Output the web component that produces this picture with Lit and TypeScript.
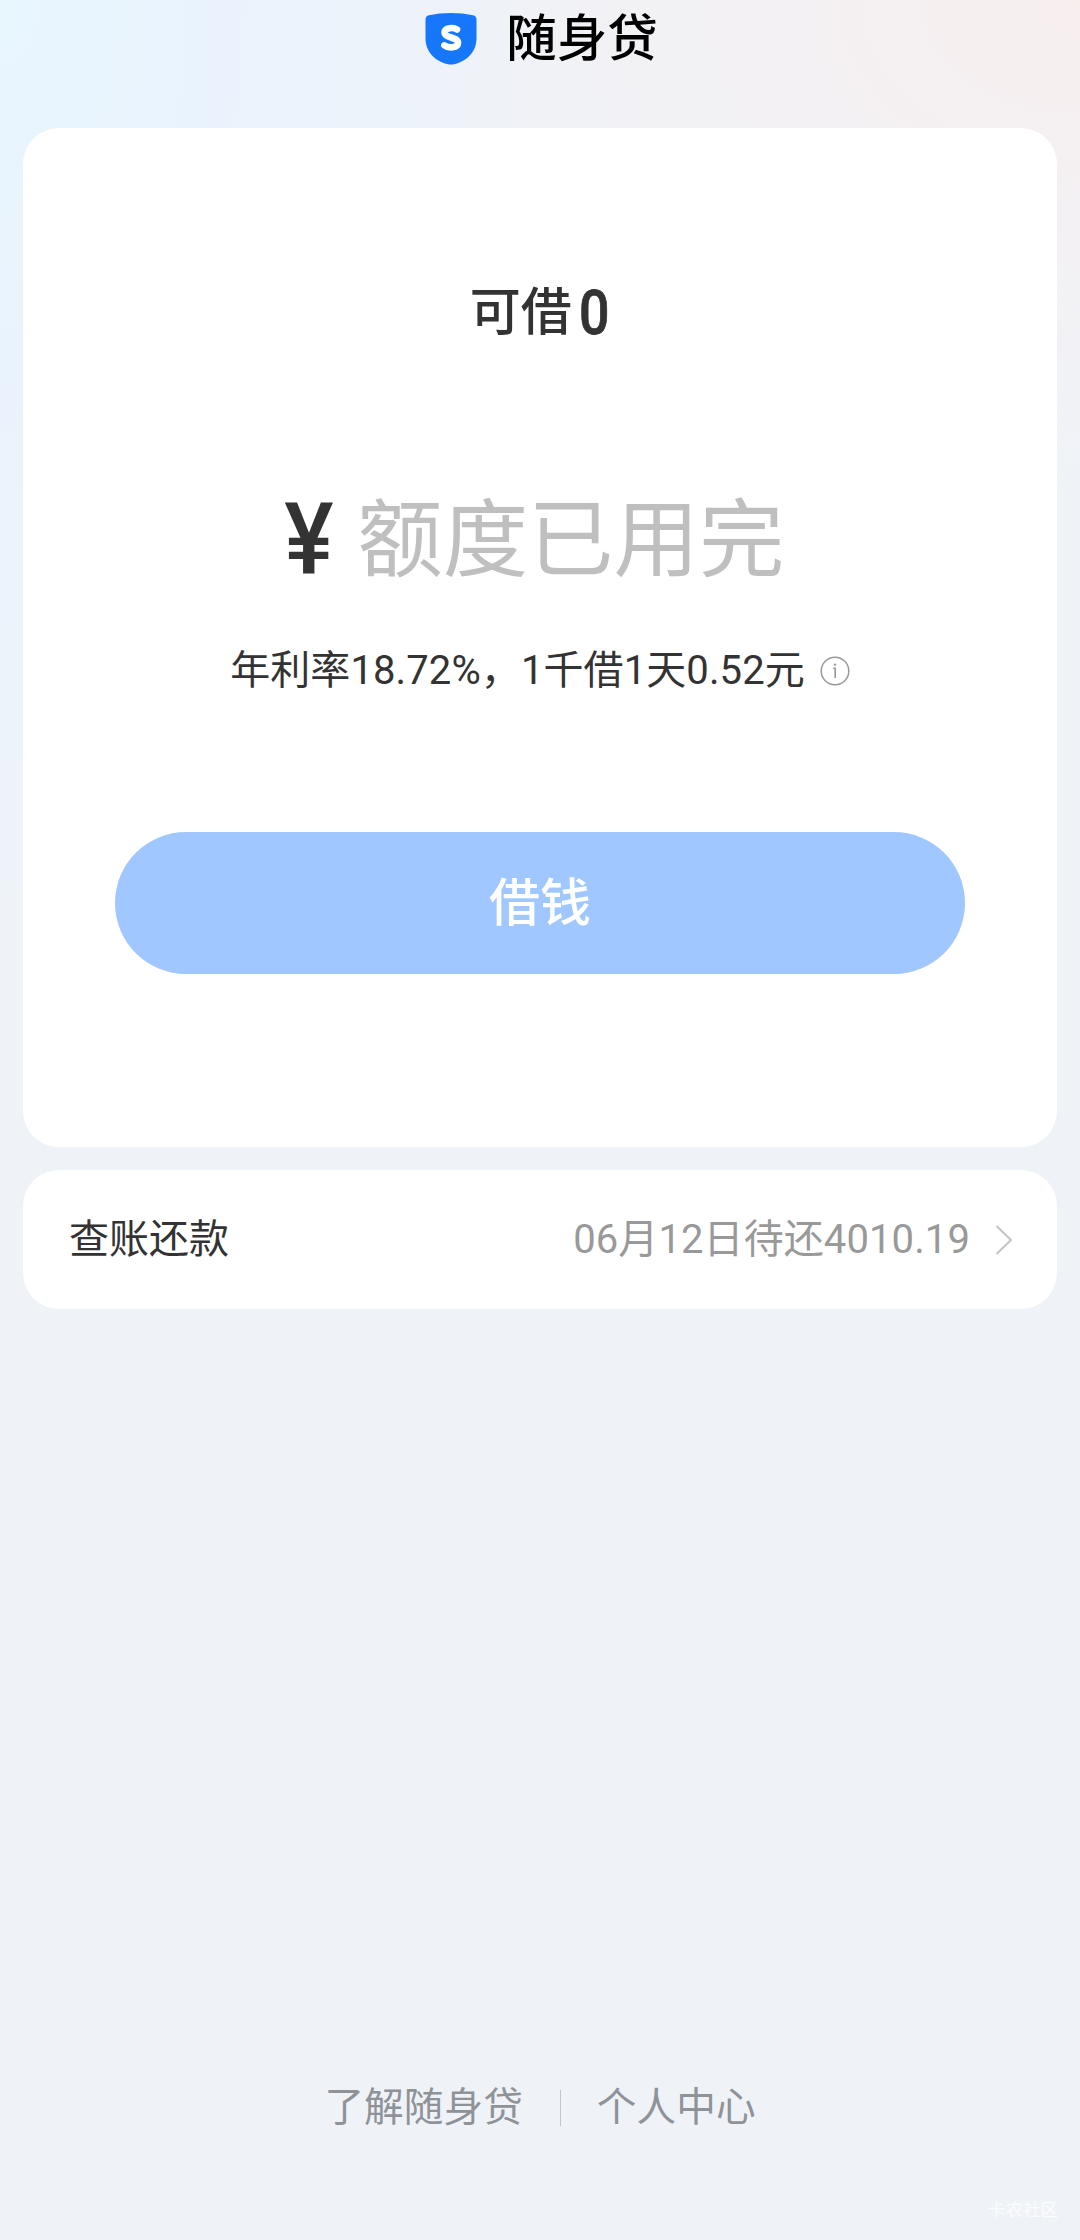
import { LitElement, html, css } from "lit";
import { customElement, property } from "lit/decorators.js";

@customElement("brand-logo")
class BrandLogo extends LitElement {
  static styles = css`
    :host { display: block; width: 52px; height: 52px; }
    .shield { display: block; }
  `;
  render() {
    return html`<svg class="shield" width="52" height="52" viewBox="0 0 52 52">
      <path d="M0.5 6.5Q0.5 3 4 2.3Q14 0 26 0Q38 0 48 2.3Q51.5 3 51.5 6.5V25C51.5 40 41 48 30 51Q26 52 22 51C11 48 0.5 40 0.5 25Z" fill="#1777fb"/>
      <path d="M32 16.4C29 14.4 19.6 14 19.6 19.6C19.6 25.4 33 23.6 33 29.8C33 35.6 23 35.2 19.4 32.4" fill="none" stroke="#fff" stroke-width="6.6" stroke-linecap="round" stroke-linejoin="round"/>
    </svg>`;
  }
}

@customElement("loan-card")
class LoanCard extends LitElement {
  @property() available = "0";
  @property() status = "额度已用完";
  static styles = css`
    :host {
      display: flex; flex-direction: column; align-items: center; box-sizing: border-box;
      height: 1019px; padding-top: 147px; border-radius: 36px; background: #fff; color: #333;
      font-family: Roboto, "Noto Sans CJK SC", sans-serif;
    }
    .available { display: flex; align-items: center; height: 76px; padding-left: 1px; font-size: 51px; font-weight: 500; line-height: 76px; }
    .count { font-size: 61px; transform: scaleX(0.88); margin-left: 5px; -webkit-text-stroke: 0.8px #333; }
    .quota { display: flex; align-items: center; height: 130px; margin-top: 124px; padding-right: 14px; }
    .yen { font-size: 101px; font-weight: 500; line-height: 130px; transform: scaleX(0.92); }
    .status { font-size: 85.4px; line-height: 130px; padding-top: 1px; color: #bfbfbf; margin-left: 22px; }
    .rate { display: flex; align-items: center; height: 60px; margin-top: 36px; font-size: 40px; line-height: 60px; letter-spacing: 0.1px; }
    .info { display: block; margin-left: 15px; }
    .borrow {
      width: 850px; height: 142px; margin: 131px 0 0; padding: 2px 0 0; border: 0; border-radius: 71px;
      background: #a0c7ff; color: #fff; font: 500 51px/140px Roboto, "Noto Sans CJK SC", sans-serif;
    }
  `;
  render() {
    return html`
      <div class="available"><span>可借</span><span class="count">${this.available}</span></div>
      <div class="quota"><span class="yen">¥</span><span class="status">${this.status}</span></div>
      <div class="rate">
        <span>年利率18.72%，1千借1天0.52元</span>
        <svg class="info" width="30" height="30" viewBox="0 0 30 30">
          <circle cx="15" cy="15" r="13.8" fill="none" stroke="#999" stroke-width="1.5"/>
          <path d="M13.2 12.2H15.2V22" fill="none" stroke="#999" stroke-width="1.6"/>
          <circle cx="15" cy="8.6" r="1.2" fill="#999"/>
        </svg>
      </div>
      <button class="borrow">借钱</button>
    `;
  }
}

@customElement("bill-row")
class BillRow extends LitElement {
  @property() label = "查账还款";
  @property() detail = "06月12日待还4010.19";
  static styles = css`
    :host {
      display: flex; align-items: center; box-sizing: border-box; height: 139px; padding: 0 43px 0 46px;
      border-radius: 36px; background: #fff; color: #333; font: 40px/60px Roboto, "Noto Sans CJK SC", sans-serif;
    }
    .label { padding-top: 1px; }
    .detail { margin-left: auto; padding-top: 1px; color: #999; letter-spacing: 0.1px; }
    .arrow { display: block; margin-left: 24px; }
  `;
  render() {
    return html`
      <span class="label">${this.label}</span>
      <span class="detail">${this.detail}</span>
      <svg class="arrow" width="20" height="32" viewBox="0 0 20 32">
        <path d="M2.5 2L17 16L2.5 30" fill="none" stroke="#c4c4c4" stroke-width="2"/>
      </svg>
    `;
  }
}

@customElement("app-root")
class AppRoot extends LitElement {
  static styles = css`
    :host {
      display: flex; flex-direction: column; position: relative; box-sizing: border-box; height: 2240px; overflow: hidden;
      padding: 0 23px; font-family: Roboto, "Noto Sans CJK SC", sans-serif;
      background:
        radial-gradient(ellipse 560px 1000px at 0 0, #e8f6fe 0%, rgba(233, 243, 254, 0.8) 40%, rgba(239, 243, 248, 0) 100%),
        radial-gradient(ellipse 700px 500px at 100% 0, #f7eeee 0%, rgba(245, 240, 242, 0.8) 40%, rgba(239, 243, 248, 0) 100%),
        #eff3f8;
    }
    .header { display: flex; justify-content: center; align-items: flex-start; height: 128px; padding-left: 3px; }
    .logo { margin-top: 13px; }
    .title { margin: 1px 0 0 29px; font-size: 50.5px; font-weight: 500; line-height: 76px; color: #000; }
    .bill { margin-top: 23px; }
    .footer { display: flex; justify-content: center; align-items: center; height: 60px; margin-top: auto; margin-bottom: 102px; font-size: 39.7px; line-height: 60px; color: #8f9398; }
    .divider { width: 1px; height: 36px; margin: 0 36px 0 37px; background: #c3c7cc; }
    .watermark { position: absolute; right: 22px; bottom: 17px; font-size: 17.5px; line-height: 26px; color: #fbfcfd; }
  `;
  render() {
    return html`
      <header class="header"><brand-logo class="logo"></brand-logo><h1 class="title">随身贷</h1></header>
      <loan-card></loan-card>
      <bill-row class="bill"></bill-row>
      <footer class="footer"><span>了解随身贷</span><i class="divider"></i><span>个人中心</span></footer>
      <span class="watermark">卡农社区</span>
    `;
  }
}
